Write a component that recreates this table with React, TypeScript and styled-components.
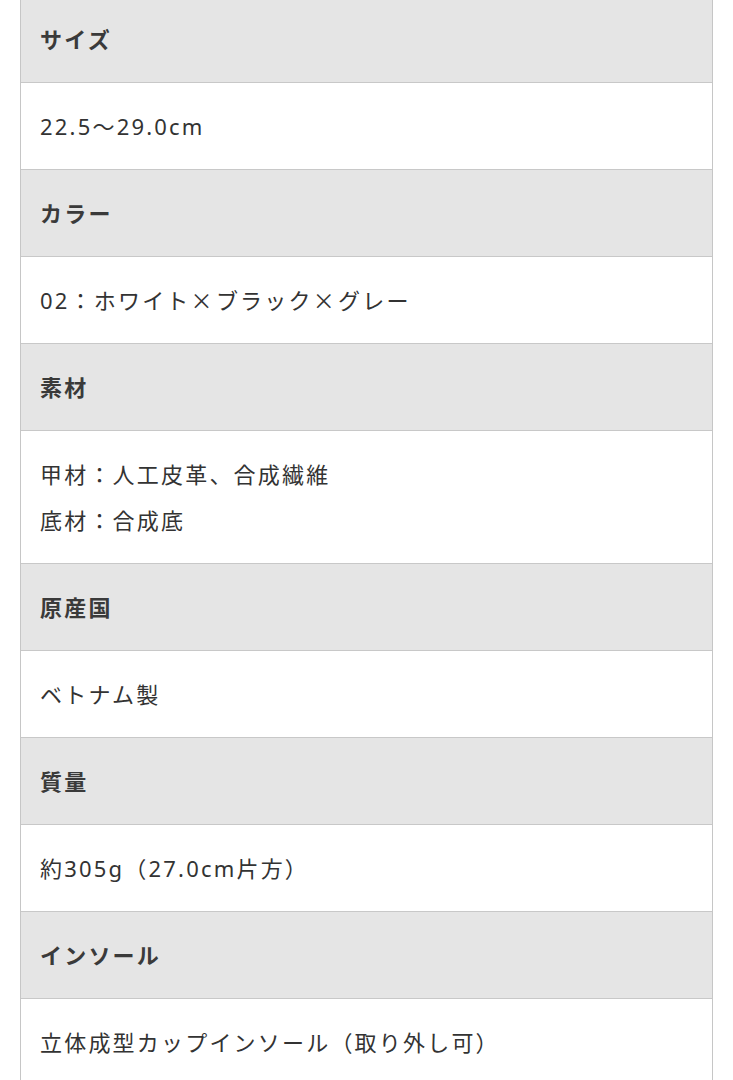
import React from "react";
import styled, { createGlobalStyle } from "styled-components";

const GlobalStyle = createGlobalStyle`
  html, body {
    margin: 0;
    padding: 0;
    background: #ffffff;
  }
  body {
    font-family: "Noto Sans", "Noto Sans CJK JP", sans-serif;
    color: #333333;
  }
`;

const SpecTable = styled.dl`
  margin: -4px 20px 0 20px;
  padding: 0;
  border-left: 1px solid #c6c6c6;
  border-right: 1px solid #c6c6c6;
  display: flex;
  flex-direction: column;
`;

const Cell = styled.div<{ $head?: boolean }>`
  margin: 0;
  padding: 20px 19px;
  font-size: 22px;
  line-height: 46px;
  letter-spacing: 0.1em;
  font-weight: ${(p) => (p.$head ? 700 : 400)};
  background: ${(p) => (p.$head ? "#e5e5e5" : "#ffffff")};
  color: ${(p) => (p.$head ? "#3a3a3a" : "#333333")};
  border-top: 1px solid #c8c8c8;
  &:first-child {
    border-top: none;
  }
`;

const Term = styled(Cell).attrs({ as: "dt" })``;
const Desc = styled(Cell).attrs({ as: "dd" })``;

const Wide = styled.span`
  font-family: "Noto Sans CJK JP", sans-serif;
  line-height: 1;
  letter-spacing: 0.15em;
`;

const specs: { label: string; lines: string[] }[] = [
  { label: "サイズ", lines: ["22.5〜29.0cm"] },
  { label: "カラー", lines: ["02：ホワイト×ブラック×グレー"] },
  { label: "素材", lines: ["甲材：人工皮革、合成繊維", "底材：合成底"] },
  { label: "原産国", lines: ["ベトナム製"] },
  { label: "質量", lines: ["約305g（27.0cm片方）"] },
  { label: "インソール", lines: ["立体成型カップインソール（取り外し可）"] },
];

function renderLine(line: string) {
  const parts = line.split("×");
  return parts.map((p, i) => (
    <React.Fragment key={i}>
      {i > 0 && <Wide>×</Wide>}
      {p}
    </React.Fragment>
  ));
}

export default function App() {
  return (
    <>
      <GlobalStyle />
      <SpecTable>
        {specs.map((s) => (
          <React.Fragment key={s.label}>
            <Term $head>{s.label}</Term>
            <Desc>
              {s.lines.map((l, i) => (
                <React.Fragment key={i}>
                  {i > 0 && <br />}
                  {renderLine(l)}
                </React.Fragment>
              ))}
            </Desc>
          </React.Fragment>
        ))}
      </SpecTable>
    </>
  );
}
